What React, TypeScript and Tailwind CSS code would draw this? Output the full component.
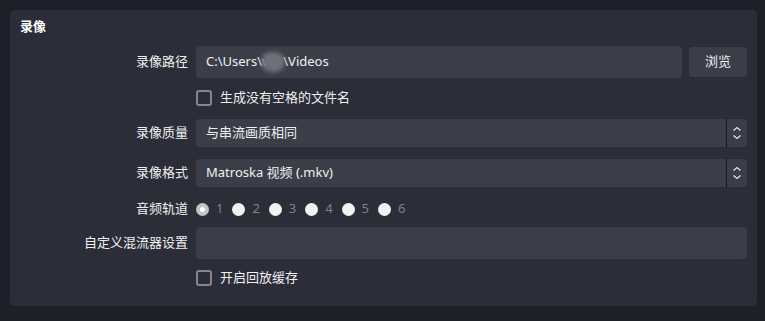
import React from "react";

const font = { fontFamily: '"Noto Sans", "Noto Sans CJK SC", sans-serif' };

function Chevrons() {
  return (
    <svg width="10" height="16" viewBox="0 0 10 16" fill="none" stroke="#e6e6e6" strokeWidth="1.3">
      <path d="M1.5 5.5 L5 2.5 L8.5 5.5" />
      <path d="M1.5 10.5 L5 13.5 L8.5 10.5" />
    </svg>
  );
}

function Checkbox({ label }: { label: string }) {
  return (
    <div className="flex items-center gap-[8px] h-[24px]">
      <div className="w-[16px] h-[16px] rounded-[3px] border-2 border-[#85878e]" />
      <span className="text-[13px] text-[#f0f0f0]">{label}</span>
    </div>
  );
}

function Select({ value }: { value: string }) {
  return (
    <div className="flex h-[28px] w-full rounded-[4px] bg-[#3b3e49] items-stretch">
      <div className="flex-1 flex items-center pl-[10px] text-[13px] text-[#f0f0f0]">{value}</div>
      <div className="w-[1px] bg-[#17181d]" />
      <div className="w-[20px] flex items-center justify-center">
        <Chevrons />
      </div>
    </div>
  );
}

function Label({ children }: { children: React.ReactNode }) {
  return <div className="w-[168px] shrink-0 text-right text-[13px] text-[#f0f0f0] pr-0">{children}</div>;
}

export default function App() {
  const tracks = [1, 2, 3, 4, 5, 6];
  return (
    <div className="w-[765px] h-[321px] bg-[#1e2029] pt-[10px] pl-[10px] pr-[8px]" style={font}>
      <div className="w-[747px] h-[296px] rounded-[5px] bg-[#2b2d38] pl-[10px] pr-[10px] pt-[7px]">
        <div className="h-[20px] flex items-center text-[13px] font-bold text-white">录像</div>

        <div className="mt-[9px] flex items-center gap-[8px] h-[32px]">
          <Label>录像路径</Label>
          <div className="flex-1 flex gap-[7px] items-center">
            <div className="relative flex-1 h-[32px] rounded-[4px] bg-[#3b3e49] flex items-center pl-[10px] text-[13px] text-[#f0f0f0]">
              <span>C:\Users\w</span>
              <span className="inline-block w-[11px]" />
              <span>\Videos</span>
              <span className="absolute left-[65px] top-[6px] w-[24px] h-[20px] rounded-full bg-[#6f717a] blur-[2px]" />
            </div>
            <div className="w-[58px] h-[30px] rounded-[4px] bg-[#3b3e49] flex items-center justify-center text-[13px] text-[#f0f0f0]">
              浏览
            </div>
          </div>
        </div>

        <div className="mt-[8px] flex gap-[8px]">
          <div className="w-[168px] shrink-0" />
          <Checkbox label="生成没有空格的文件名" />
        </div>

        <div className="mt-[9px] flex items-center gap-[8px]">
          <Label>录像质量</Label>
          <Select value="与串流画质相同" />
        </div>

        <div className="mt-[12px] flex items-center gap-[8px]">
          <Label>录像格式</Label>
          <Select value="Matroska 视频 (.mkv)" />
        </div>

        <div className="mt-[12px] flex items-center gap-[8px] h-[20px]">
          <Label>音频轨道</Label>
          <div className="flex items-center">
            {tracks.map((t) => (
              <div key={t} className="flex items-center w-[36.4px]">
                {t === 1 ? (
                  <div className="w-[13px] h-[13px] rounded-full bg-[#c4c4c4] flex items-center justify-center">
                    <div className="w-[5px] h-[5px] rounded-full bg-white" />
                  </div>
                ) : (
                  <div className="w-[13px] h-[13px] rounded-full bg-[#f2f2f2]" />
                )}
                <span className="ml-[7px] text-[13px] text-[#85817d]">{t}</span>
              </div>
            ))}
          </div>
        </div>

        <div className="mt-[8px] flex items-center gap-[8px]">
          <Label>自定义混流器设置</Label>
          <div className="flex-1 h-[32px] rounded-[4px] bg-[#3b3e49]" />
        </div>

        <div className="mt-[7px] flex gap-[8px]">
          <div className="w-[168px] shrink-0" />
          <Checkbox label="开启回放缓存" />
        </div>
      </div>
    </div>
  );
}
